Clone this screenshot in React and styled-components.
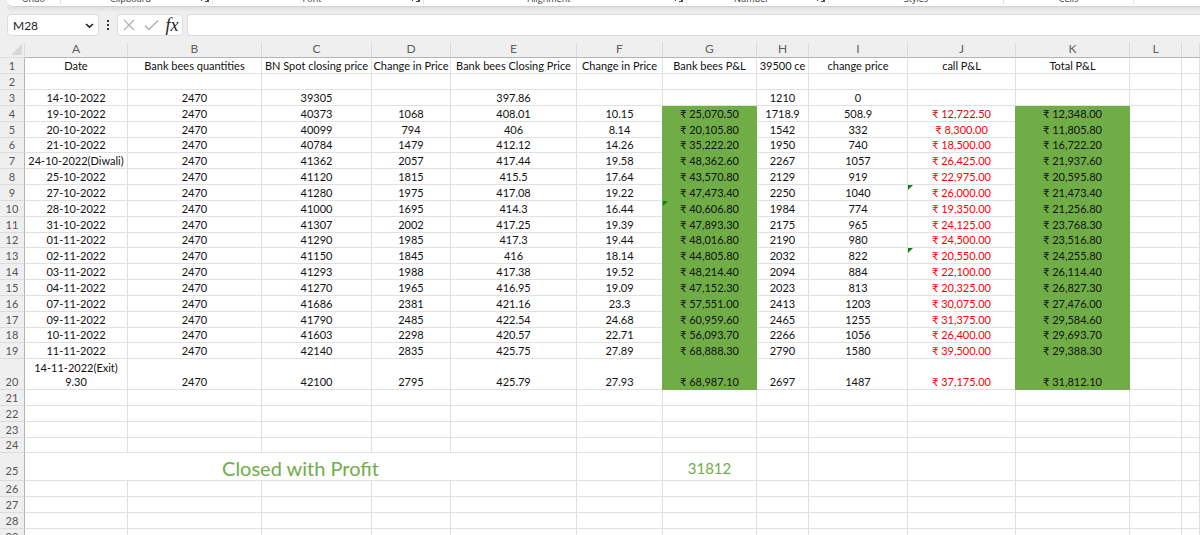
import React from 'react';
import styled, { createGlobalStyle } from 'styled-components';

const GlobalStyle = createGlobalStyle`
  * { box-sizing: border-box; }
  body { margin: 0; }
`;

const lineColor = '#e1e1e1';
const green = '#70ad47';

const Page = styled.div`
  height: 100vh;
  overflow: hidden;
  background: #efefef;
  color: #111;
  font-family: Lato, "Noto Sans", sans-serif;
  font-size: 12px;
`;

const Ribbon = styled.header`
  display: flex;
  align-items: flex-end;
  height: 7px;
  margin-left: 7px;
  padding-bottom: 2px;
  overflow: hidden;
  background: #fff;
  border-bottom: 1px solid #d2d2d2;
  border-bottom-left-radius: 6px;
`;

const RibbonShade = styled.div`
  margin-left: 7px;
  height: 5px;
  background: linear-gradient(#dedede, #efefef);
  border-bottom-left-radius: 6px;
`;

const Group = styled.div`
  flex: none;
  display: flex;
  align-items: flex-end;
  width: ${(p) => p.$width}px;
  border-right: 1px solid #e4e4e4;
`;

const GroupLabel = styled.span`
  flex: 1;
  color: #333;
  font-family: "Open Sans", sans-serif;
  font-size: 9px;
  line-height: 10px;
  text-align: center;
`;

const Launcher = styled.button`
  width: 12px;
  height: 12px;
  padding: 0;
  border: 0;
  background: none;
  svg { display: block; }
`;

const FormulaBar = styled.div`
  display: flex;
  align-items: center;
  gap: 4px;
  height: 26px;
  padding-left: 7px;
`;

const Box = styled.div`
  display: flex;
  align-items: center;
  height: 22px;
  background: #fff;
  border: 1px solid #dcdcdc;
  border-radius: 4px;
`;

const NameBox = styled(Box)`
  width: 92px;
  padding: 0 4px 0 5px;
`;

const NameInput = styled.input`
  flex: 1;
  min-width: 0;
  padding: 0;
  border: 0;
  outline: 0;
  background: none;
  color: #222;
  font: 12px Lato, sans-serif;
`;

const IconButton = styled.button`
  display: flex;
  align-items: center;
  justify-content: center;
  width: ${(p) => p.$width}px;
  height: 20px;
  padding: 0;
  border: 0;
  background: none;
`;

const FunctionButton = styled(IconButton)`
  color: #222;
  font: italic 18px/20px "Liberation Serif", serif;
`;

const Actions = styled(Box)`
  width: 66px;
`;

const FormulaInput = styled.input`
  flex: 1;
  min-width: 0;
  height: 22px;
  border: 1px solid #dcdcdc;
  border-right: 0;
  border-radius: 4px 0 0 4px;
  outline: 0;
  background: #fff;
  font: 12px Lato, sans-serif;
`;

const Sheet = styled.table`
  width: 100%;
  margin-top: 4px;
  table-layout: fixed;
  border-collapse: separate;
  border-spacing: 0;
  background: #fff;
`;

const ColumnHead = styled.th`
  height: 16px;
  padding: 0;
  background: #efefef;
  border-right: 1px solid #dcdcdc;
  border-bottom: 1px solid #b4b4b4;
  color: #606060;
  font-size: 12px;
  font-weight: 400;
  line-height: 13px;
  vertical-align: top;
`;

const Corner = styled(ColumnHead)`
  border-bottom-color: #dcdcdc;
  svg { display: block; margin: 2px 0 0 11px; }
`;

const RowHead = styled.th`
  padding: 0 0 ${(p) => (p.$tall ? 2 : 0)}px;
  background: #efefef;
  border-right: 1px solid #b4b4b4;
  border-bottom: 1px solid #dcdcdc;
  color: #555;
  font-size: 11px;
  font-weight: 400;
  line-height: 14px;
  text-align: center;
  vertical-align: bottom;
`;

const Row = styled.tr`
  height: ${(p) => p.$height || 16}px;
  &:nth-child(6n) { height: 15px; }
`;

const tones = { loss: '#ff0000', darkLoss: '#c8100c', profit: green };

const Cell = styled.td`
  position: relative;
  padding: 0;
  border-right: 1px solid ${(p) => (p.$filled ? green : lineColor)};
  border-bottom: 1px solid ${(p) => (p.$filled ? green : lineColor)};
  background: ${(p) => (p.$filled ? green : '#fff')};
  box-shadow: ${(p) => (p.$filled ? `-1px 0 ${green}` : 'none')};
  color: ${(p) => tones[p.$tone] || 'inherit'};
  font-size: ${(p) => p.$size || 11}px;
  line-height: ${(p) => (p.$size ? 24 : 14)}px;
  text-align: center;
  vertical-align: bottom;
  white-space: pre;
`;

const ErrorMark = styled.span`
  position: absolute;
  top: 0;
  left: 0;
  border-top: 5px solid #118011;
  border-right: 5px solid transparent;
`;

const widths = [25, 103, 134, 110, 79, 126, 86, 94, 52, 99, 108, 114, 52];
const letters = 'ABCDEFGHIJKL'.split('');

const headings = ['Date', 'Bank bees quantities', 'BN Spot closing price', 'Change in Price', 'Bank bees Closing Price', 'Change in Price', 'Bank bees P&L', '39500 ce', 'change price', 'call P&L', 'Total P&L'];

const records = [
  ['14-10-2022', '2470', '39305', '', '397.86', '', '', '1210', '0', '', ''],
  ['19-10-2022', '2470', '40373', '1068', '408.01', '10.15', '25,070.50', '1718.9', '508.9', '12,722.50', '12,348.00'],
  ['20-10-2022', '2470', '40099', '794', '406', '8.14', '20,105.80', '1542', '332', '8,300.00', '11,805.80'],
  ['21-10-2022', '2470', '40784', '1479', '412.12', '14.26', '35,222.20', '1950', '740', '18,500.00', '16,722.20'],
  ['24-10-2022(Diwali)', '2470', '41362', '2057', '417.44', '19.58', '48,362.60', '2267', '1057', '26,425.00', '21,937.60'],
  ['25-10-2022', '2470', '41120', '1815', '415.5', '17.64', '43,570.80', '2129', '919', '22,975.00', '20,595.80'],
  ['27-10-2022', '2470', '41280', '1975', '417.08', '19.22', '47,473.40', '2250', '1040', '26,000.00', '21,473.40'],
  ['28-10-2022', '2470', '41000', '1695', '414.3', '16.44', '40,606.80', '1984', '774', '19,350.00', '21,256.80'],
  ['31-10-2022', '2470', '41307', '2002', '417.25', '19.39', '47,893.30', '2175', '965', '24,125.00', '23,768.30'],
  ['01-11-2022', '2470', '41290', '1985', '417.3', '19.44', '48,016.80', '2190', '980', '24,500.00', '23,516.80'],
  ['02-11-2022', '2470', '41150', '1845', '416', '18.14', '44,805.80', '2032', '822', '20,550.00', '24,255.80'],
  ['03-11-2022', '2470', '41293', '1988', '417.38', '19.52', '48,214.40', '2094', '884', '22,100.00', '26,114.40'],
  ['04-11-2022', '2470', '41270', '1965', '416.95', '19.09', '47,152.30', '2023', '813', '20,325.00', '26,827.30'],
  ['07-11-2022', '2470', '41686', '2381', '421.16', '23.3', '57,551.00', '2413', '1203', '30,075.00', '27,476.00'],
  ['09-11-2022', '2470', '41790', '2485', '422.54', '24.68', '60,959.60', '2465', '1255', '31,375.00', '29,584.60'],
  ['10-11-2022', '2470', '41603', '2298', '420.57', '22.71', '56,093.70', '2266', '1056', '26,400.00', '29,693.70'],
  ['11-11-2022', '2470', '42140', '2835', '425.75', '27.89', '68,888.30', '2790', '1580', '39,500.00', '29,388.30'],
  ['14-11-2022(Exit)\n9.30', '2470', '42100', '2795', '425.79', '27.93', '68,987.10', '2697', '1487', '37,175.00', '31,812.10'],
];

const rows = [headings, [], ...records];
const columns = Array.from({ length: 13 }, (_, i) => i);
const moneyColumns = [6, 9, 10];
const flagged = ['9-9', '10-6', '13-9'];
const groups = [['Undo', 54, false], ['Clipboard', 152, true], ['Font', 211, true], ['Alignment', 263, true], ['Number', 142, true], ['Styles', 175, false], ['Cells', 130, false]];

function DataRow({ number, values }) {
  return (
    <Row $height={number === 20 ? 31 : 16}>
      <RowHead scope="row">{number}</RowHead>
      {columns.map((c) => {
        const value = values[c] || '';
        const money = number > 3 && value && moneyColumns.includes(c);
        const tone = money && c === 9 ? (number === 4 ? 'darkLoss' : 'loss') : undefined;
        return (
          <Cell key={c} $filled={money && c !== 9} $tone={tone}>
            {flagged.includes(`${number}-${c}`) && <ErrorMark />}
            {money ? `₹ ${value}` : value}
          </Cell>
        );
      })}
    </Row>
  );
}

function ResultRow() {
  return (
    <Row $height={28}>
      <RowHead scope="row" $tall>25</RowHead>
      <Cell colSpan={5} $size={20} $tone="profit">Closed with Profit</Cell>
      <Cell />
      <Cell $size={15} $tone="profit">31812</Cell>
      {columns.slice(7).map((c) => <Cell key={c} />)}
    </Row>
  );
}

export default function App() {
  return (
    <Page>
      <GlobalStyle />
      <Ribbon>
        {groups.map(([name, width, launcher]) => (
          <Group key={name} $width={width}>
            <GroupLabel>{name}</GroupLabel>
            {launcher && (
              <Launcher aria-label={`${name} settings`}>
                <svg width="12" height="12" viewBox="0 0 12 12" fill="none" stroke="#444">
                  <path d="M1.500 9V2.500H8M4 5L8.500 9.500M8.500 6V9.500H5" />
                </svg>
              </Launcher>
            )}
          </Group>
        ))}
      </Ribbon>
      <RibbonShade />
      <FormulaBar>
        <NameBox>
          <NameInput aria-label="Name box" defaultValue="M28" />
          <IconButton $width={10} aria-label="Open name list">
            <svg width="9" height="7" viewBox="0 0 9 7" fill="none" stroke="#222" strokeWidth="1.600">
              <path d="M1 2L4.500 5.200L8 2" />
            </svg>
          </IconButton>
        </NameBox>
        <svg width="10" height="12" viewBox="0 0 10 12" fill="#333">
          <path d="M4 1h2v2H4zM4 5h2v2H4zM4 9h2v2H4z" />
        </svg>
        <Actions>
          <IconButton $width={22} aria-label="Cancel">
            <svg width="12" height="12" viewBox="0 0 12 12" fill="none" stroke="#b0b0b0" strokeWidth="1.200">
              <path d="M1 1L11 11M11 1L1 11" />
            </svg>
          </IconButton>
          <IconButton $width={22} aria-label="Enter">
            <svg width="15" height="12" viewBox="0 0 15 12" fill="none" stroke="#b0b0b0" strokeWidth="1.300">
              <path d="M1 6.500L5 10.500L14 1.500" />
            </svg>
          </IconButton>
          <FunctionButton $width={20} aria-label="Insert function">fx</FunctionButton>
        </Actions>
        <FormulaInput aria-label="Formula" />
      </FormulaBar>
      <Sheet>
        <colgroup>
          {widths.map((w, i) => <col key={i} width={w} />)}
          <col />
        </colgroup>
        <thead>
          <tr>
            <Corner aria-label="Select all">
              <svg width="11" height="11" viewBox="0 0 11 11" fill="#d8d8d8"><path d="M11 0V11H0z" /></svg>
            </Corner>
            {letters.map((l) => <ColumnHead key={l} scope="col">{l}</ColumnHead>)}
            <ColumnHead />
          </tr>
        </thead>
        <tbody>
          {rows.map((values, i) => <DataRow key={i} number={i + 1} values={values} />)}
          {[21, 22, 23, 24].map((n) => <DataRow key={n} number={n} values={[]} />)}
          <ResultRow />
          {[26, 27, 28, 29, 30].map((n) => <DataRow key={n} number={n} values={[]} />)}
        </tbody>
      </Sheet>
    </Page>
  );
}
